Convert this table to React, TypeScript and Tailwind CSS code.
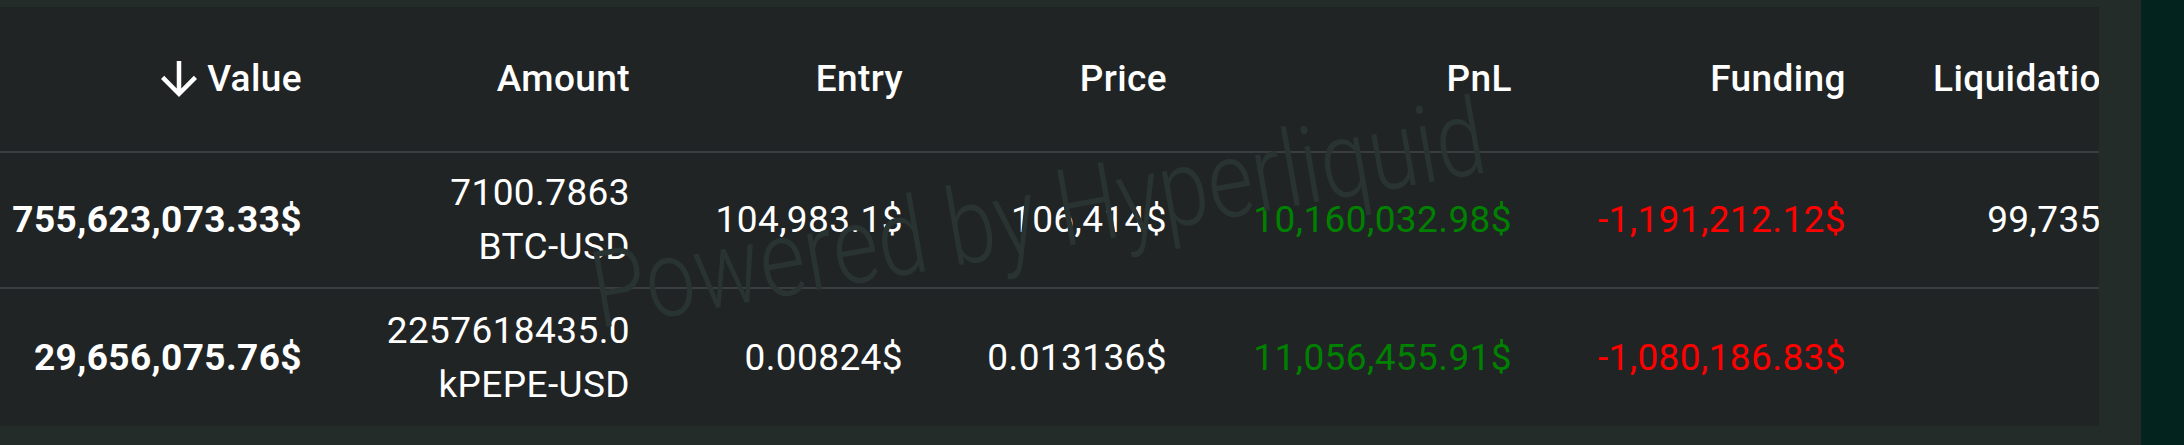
import React from "react";

const cols = "grid grid-cols-[302px_328px_273px_264px_345px_334px_276px]";

function ArrowDown() {
  return (
    <svg width="36" height="36" viewBox="4 4 16 16" className="shrink-0">
      <path fill="#ffffff" d="M20 12l-1.41-1.41L13 16.17V4h-2v12.17l-5.58-5.59L4 12l8 8 8-8z" />
    </svg>
  );
}

type Row = {
  value: string;
  amount: string;
  coin: string;
  entry: string;
  price: string;
  pnl: string;
  funding: string;
  liq: string;
};

const rows: Row[] = [
  {
    value: "755,623,073.33$",
    amount: "7100.7863",
    coin: "BTC-USD",
    entry: "104,983.1$",
    price: "106,414$",
    pnl: "10,160,032.98$",
    funding: "-1,191,212.12$",
    liq: "99,735$",
  },
  {
    value: "29,656,075.76$",
    amount: "2257618435.0",
    coin: "kPEPE-USD",
    entry: "0.00824$",
    price: "0.013136$",
    pnl: "11,056,455.91$",
    funding: "-1,080,186.83$",
    liq: "",
  },
];

export default function App() {
  return (
    <div className="w-[2184px] h-[445px] flex bg-[#242c2a] overflow-hidden font-['Roboto',sans-serif] text-[37px] tracking-[0.4px] text-white">
      <div className="flex-1 pt-[7px]">
        <div className="relative w-[2099px] h-[419px] bg-[#212425] overflow-hidden">
          <div className={`${cols} h-[146px] border-b-2 border-[#3a3d3f] items-center font-medium whitespace-nowrap`}>
            <div className="flex items-center justify-end gap-[10px]">
              <ArrowDown />
              <span>Value</span>
            </div>
            <div className="text-right">Amount</div>
            <div className="text-right">Entry</div>
            <div className="text-right">Price</div>
            <div className="text-right">PnL</div>
            <div className="text-right">Funding</div>
            <div className="text-right">Liquidation</div>
          </div>
          {rows.map((r, i) => (
            <div
              key={i}
              className={`${cols} items-center whitespace-nowrap ${
                i === 0 ? "h-[136px] border-b-2 border-[#3a3d3f]" : "h-[137px]"
              }`}
            >
              <div className="text-right font-bold">{r.value}</div>
              <div className="flex flex-col items-end leading-[54px]">
                <span>{r.amount}</span>
                <span>{r.coin}</span>
              </div>
              <div className="text-right">{r.entry}</div>
              <div className="text-right">{r.price}</div>
              <div className="text-right text-[#008000]">{r.pnl}</div>
              <div className="text-right text-[#ff0000]">{r.funding}</div>
              <div className="text-right">{r.liq}</div>
            </div>
          ))}
          <div className="pointer-events-none absolute left-[1038px] top-[207px] -translate-x-1/2 -translate-y-1/2 -rotate-[10deg] scale-y-[1.22] whitespace-nowrap text-[88px] font-light tracking-normal text-[#293432] leading-none">
            Powered by Hyperliquid
          </div>
        </div>
      </div>
      <div className="w-[43px] bg-[#03231e]" />
    </div>
  );
}
